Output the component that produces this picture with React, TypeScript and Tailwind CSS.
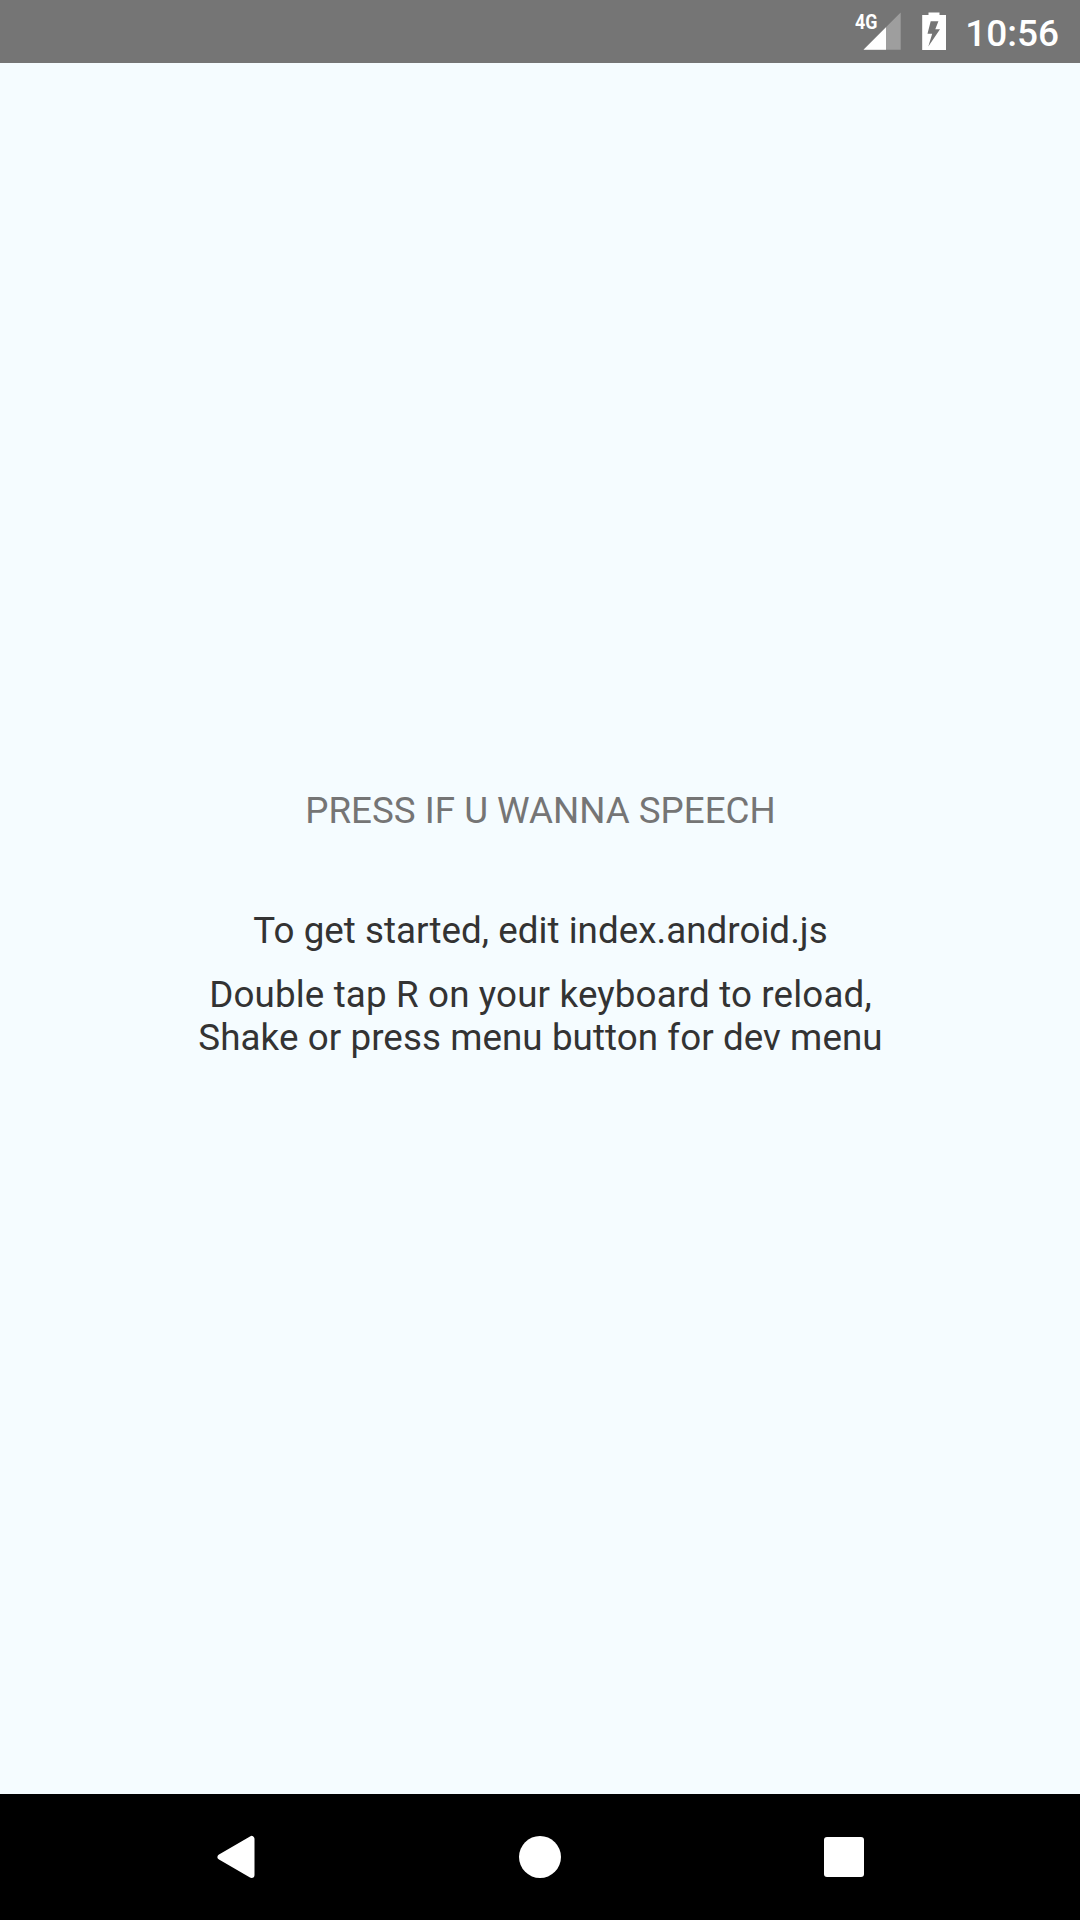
export default function App() {
  return (
    <div className="flex h-[1920px] w-[1080px] flex-col overflow-hidden bg-[#f5fcff] font-['Roboto',sans-serif]">
      <header className="flex h-[63px] shrink-0 items-start justify-end bg-[#757575] pr-[21px] pt-[11px] text-white">
        <div className="relative mr-[21px] h-[40px] w-[47px]">
          <svg className="absolute inset-0" width="47" height="40" viewBox="854 11 47 40">
            <path d="M900.7 12.5V49.7H863.5Z" fill="#fff" fillOpacity=".3" />
            <path d="M886 27.2V49.7H863.5Z" fill="#fff" />
          </svg>
          <span className="absolute left-[1px] top-0 origin-left scale-x-[.85] text-[21px] font-bold leading-[22px]">4G</span>
        </div>
        <svg className="mr-[19px]" width="24" height="40" viewBox="922 11 24 40">
          <path fill="#fff" fillRule="evenodd" d="M928.5 12.5h11V15H946v35h-23.8V15h6.3ZM930.7 21.3l-3.2 12.4h4.7l-3.9 12.8L940 29.2h-4.7l3.1-7.9Z" />
        </svg>
        <span className="pt-px text-[37px] font-medium leading-[44px]">10:56</span>
      </header>
      <main className="flex flex-1 flex-col items-center pt-[726px] text-center text-[36.75px] leading-[43px] text-[#333333]">
        <button className="h-[43px] whitespace-nowrap pl-px text-[#757575]">PRESS IF U WANNA SPEECH</button>
        <p className="mt-[77px] pl-px tracking-[0.03px]">To get started, edit index.android.js</p>
        <p className="mt-[21px] pl-px">
          <span className="tracking-[0.14px]">Double tap R on your keyboard to reload,</span>
          <br />
          <span className="tracking-[0.07px]">Shake or press menu button for dev menu</span>
        </p>
      </main>
      <nav className="flex h-[126px] shrink-0 items-center justify-between bg-black px-[216px]">
        <svg width="40" height="44" viewBox="0 0 40 44"><path d="M35.5 4V40L4.5 22Z" fill="#fff" stroke="#fff" strokeWidth="6" strokeLinejoin="round" /></svg>
        <svg width="44" height="44"><circle cx="22" cy="22" r="21" fill="#fff" /></svg>
        <svg width="40" height="40"><rect width="40" height="40" rx="3" fill="#fff" /></svg>
      </nav>
    </div>
  );
}
